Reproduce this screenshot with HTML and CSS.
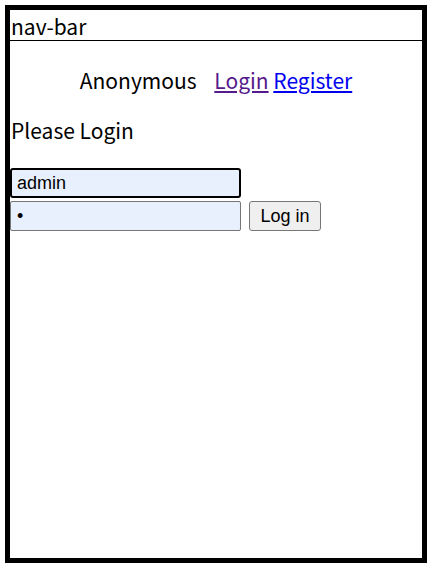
FILE: index.html
```html
<!DOCTYPE html>
<html lang="en">
<head>
    <meta charset="UTF-8">
    <meta name="viewport" content="width=device-width, initial-scale=1.0">
    <title>Login</title>
    <link rel="stylesheet" href="styles.css">
</head>
<body>
    <div class="app">
        <div class="nav-bar">nav-bar</div>

        <div class="user-line">
            <span class="user-name">Anonymous</span>
            <a href="#" class="visited">Login</a>
            <a href="#">Register</a>
        </div>

        <div class="title">Please Login</div>

        <form class="login-form" onsubmit="return false">
            <input type="text" class="field focused" value="admin">
            <div class="row">
                <input type="password" class="field" value="a">
                <button class="btn">Log in</button>
            </div>
        </form>
    </div>
</body>
</html>
```

FILE: styles.css
```css
body { margin: 5px; font-family: "Noto Sans CJK KR", "Noto Sans", sans-serif; font-size: 21px; color: #000; background: #fff; }
.app { width: 412px; height: 548px; border: 5px solid #000; }
.nav-bar { height: 30px; line-height: 32px; padding-left: 1px; border-bottom: 1px solid #000; }
.user-line { text-align: center; margin-top: 24px; height: 30px; line-height: 30px; }
.user-name { margin-right: 13px; }
a { color: #0000ee; }
a.visited { color: #551a8b; }
.title { margin-top: 20px; padding-left: 1px; height: 30px; line-height: 30px; }
.login-form { margin-top: 23px; display: flex; flex-direction: column; gap: 3px; }
.row { display: flex; gap: 8px; align-items: center; }
.field { box-sizing: border-box; width: 231px; height: 30px; margin: 0; padding: 1px 6px; border: 1px solid #767676; border-radius: 2px; background: #e8f0fe; font-family: "Liberation Sans", Arial, sans-serif; font-size: 18px; color: #000; }
.field.focused { border: 2px solid #000; border-radius: 3px; padding: 1px 5px; }
.btn { box-sizing: border-box; height: 30px; width: 72px; padding: 0 6px; border: 1px solid #767676; border-radius: 3px; background: #efefef; font-family: "Liberation Sans", Arial, sans-serif; font-size: 18px; color: #000; }
```
